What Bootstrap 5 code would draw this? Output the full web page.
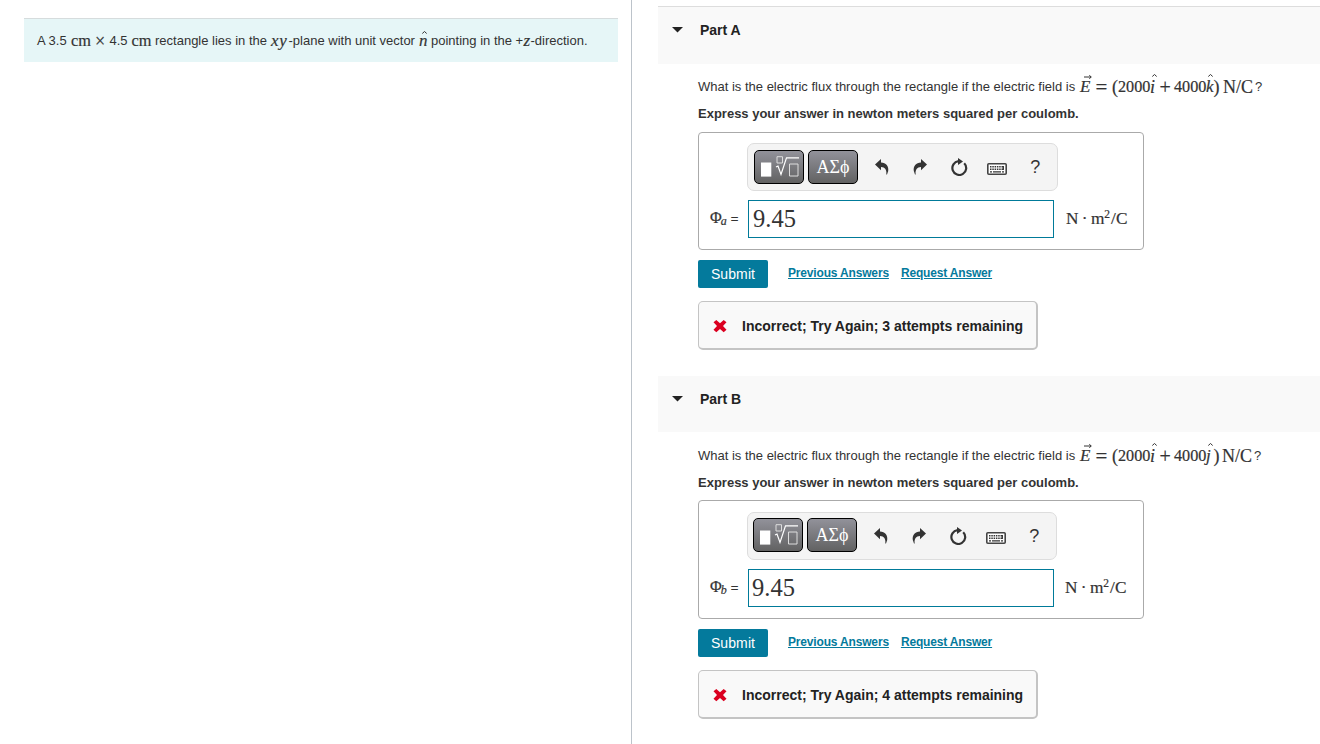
<!DOCTYPE html>
<html lang="en">
<head>
<meta charset="utf-8">
<meta name="viewport" content="width=device-width, initial-scale=1">
<title>Electric flux</title>
<link href="https://cdn.jsdelivr.net/npm/bootstrap@5.3.0/dist/css/bootstrap.min.css" rel="stylesheet">
<style>
body{font-family:"Liberation Sans",Arial,sans-serif;font-size:13px;line-height:20px;color:#333;background:#fff;height:744px;overflow:hidden}
.pane-left{width:632px;border-right:1px solid #bcc3ca;padding:18px 13px 0 24px}
.intro{height:44px;background:#e6f6f7;border-top:1px solid #d6dcdd;padding:12px 0 0 13px}
.pane-right{padding:6px 0 0 26px}
.part-head{height:56px;background:#f9f9f9;padding:13px 0 0 14px}
.part-head h2{font-size:14px;line-height:20px;font-weight:700;color:#222;margin:0 0 0 17px}
.first-head{height:58px;border-top:1px solid #ddd}
.part-body{padding:10px 0 0 40px}
.line{display:flex;white-space:pre;height:26px;line-height:26px}
.intro .line{height:20px;line-height:20px}
.line>span{flex:none;position:relative}
.ser{font-family:"Liberation Serif","Times New Roman",serif}
.line .ser,.units,.field-name{-webkit-text-stroke:.2px #333}
.xy{letter-spacing:.8px}
.mth{font-size:16.2px}
.hatmark{position:absolute;overflow:visible;fill:none;stroke:#333;stroke-width:1}
.instr{font-weight:700;letter-spacing:0;height:20px;margin-top:4px}
.answer-box{width:446px;height:118px;border:1px solid #aaa;border-radius:4px;margin-top:8px;padding:10px 0 0 11px}
.tools{width:311px;height:48px;margin-left:37px;background:#f4f4f4;border:1px solid #ddd;border-radius:7px;padding:0 6px}
.tool-btn{width:50px;height:34px;border:1px solid #000;border-radius:5px;background:linear-gradient(#92929a,#626262);color:#fff;padding:0;font-size:18px;line-height:30px}
.tool-btn svg{display:block;margin:-1px 0 0 6px;overflow:visible}
.tool-btn+.tool-btn{margin-left:4px}
.tool-icons{margin-left:5px}
.tool-ico{width:38.3px;height:20px;flex:none;display:flex;align-items:center;justify-content:center;font-size:18px;color:#333;fill:#333}
.field-row{margin-top:9px;height:38px}
.field-name{width:38px;font-size:16px;white-space:nowrap;padding-bottom:1px}
.field-name sub{font-size:12px;font-style:italic;bottom:-.2em;margin-left:-1px}
.eq{font-family:"Liberation Sans",Arial,sans-serif;font-size:13px}
.field{width:306px;height:38px;border:1px solid #007a99;padding:0 0 0 4px;font-size:24.5px;line-height:36px;color:#333}
.units{margin-left:12px;font-size:17.3px;white-space:pre;word-spacing:-1px}
.units sup{font-size:11.5px;top:-.55em;margin-right:1px}
.submit-btn{width:70px;height:28px;border-radius:2px;border:0;background:#047a9c;color:#fff;font-size:14px;padding:0;letter-spacing:.1px}
.act{color:#047a9c;font-weight:700;font-size:12px;line-height:16px;letter-spacing:-.17px;text-decoration:underline}
.feedback{width:340px;height:49px;margin-top:13px;border:1px solid #c4c4c4;border-right-width:2px;border-bottom-width:2px;border-radius:5px;background:#f9f9f9;font-size:14px;font-weight:700;color:#222;padding:1px 0 0 14px}
.part-b .part-body{padding-top:11px}
.part-b .answer-box{margin-top:7px;height:119px;padding-top:11px}
.part-b .tools{width:310px;padding:0 5px}
.part-b .tool-btn{margin-top:-2px}
.part-b .tool-ico{margin-top:-1px}
.part-b .field{padding-left:3px}
.part-b .units{margin-left:11px}
.part-a{height:370px}
</style>
<script src="https://cdn.jsdelivr.net/npm/bootstrap@5.3.0/dist/js/bootstrap.bundle.min.js"></script>
</head>
<body>
<svg width="0" height="0" class="d-none" aria-hidden="true">
<symbol id="undo" viewBox="0 0 14 16"><path d="M0 5.500 6 0V3.400C11 3.400 14 7 13.200 12L12 15.400H11.300C12 11 10 8.200 6 8V11.200Z"/></symbol>
<symbol id="reload" viewBox="0 0 18 18"><path d="M14.200 5.200A6.900 6.900 0 1 1 8.500 3.200" fill="none" stroke="#333" stroke-width="2.200"/><path d="M8 0 13 3.400 8 7Z"/></symbol>
<symbol id="keys" viewBox="0 0 20 12"><rect x=".8" y=".8" width="18.400" height="10.400" rx="1" fill="#fff" stroke="#444" stroke-width="1.600"/><path d="M3 3.700H17M3 6.200H17" stroke="#333" stroke-width="1.400" stroke-dasharray="1.500 .8"/><path d="M3 8.800h2M6 8.800h8M15 8.800h2M16.300 3v4" stroke="#333" stroke-width="1.300"/></symbol>
<symbol id="root" viewBox="0 0 38 21"><path d="M0 6.500H10.300V20.600H0Z" fill="#fff"/><path d="M16 .7H21.500V7H16ZM28.500 8H37V20H28.500Z" fill="none" stroke="#ddd"/><path d="M15 11 17 10 20 18.500 25.500 1.800H38" fill="none" stroke="#fff" stroke-width="1.200"/></symbol>
<symbol id="cross" viewBox="0 0 14 14"><path d="M3.300 1 7 4.200 10.700 1 13.500 3.300 10 7 13.500 10.700 10.700 13.300 7 10 3.300 13.300.5 10.700 4 7 .5 3.300Z" fill="#db0020"/></symbol>
</svg>
<div class="d-flex h-100">
<section class="pane-left flex-shrink-0">
<div class="intro"><div class="line" id="intro-line"></div></div>
</section>
<main class="pane-right flex-grow-1">
<section class="part-a" id="pa"></section>
<section class="part-b" id="pb"></section>
</main>
</div>
<script>
const hat = (x, y) => `<svg class="hatmark" style="left:${x}px;top:${y}px" width="5" height="3"><path d="M.3 2.500 2.500.500 4.700 2.500"/></svg>`;
const arrow = `<svg class="hatmark" style="left:4px;top:1px" width="8" height="4"><path d="M0 2H7M5.300.300 7.300 2 5.300 3.700"/></svg>`;
const row = (parts) => parts.map(([text, width, cls = "", size, extra = ""]) =>
  `<span class="${cls}" style="width:${width}px;${size ? "font-size:" + size + "px" : ""}">${text}${extra}</span>`).join("");
const it = "ser fst-italic";
document.getElementById("intro-line").innerHTML = row([
  ["A 3.5", 34], ["cm", 24, "ser", 16.3], ["×", 14.5, "ser", 18], ["4.5", 22], ["cm", 23.5, "ser", 16.3],
  ["rectangle lies in the", 116], ["xy", 17.5, it + " xy", 17], ["-plane with unit vector", 130.5], ["n", 12, it, 17, hat(3, 0)],
  ["pointing in the +", 92.5], ["z", 7, it, 17], ["-direction.", 60]]);
function part(name, sub, vec, tries, first) {
  const b = !first;
  return `<div class="part-head ${first ? "first-head" : ""} d-flex align-items-start"><svg width="11" height="6" style="margin-top:7px" viewBox="0 0 11 6"><path d="M0 0H11L5.500 5.500Z" fill="#222"/></svg><h2>Part ${name}</h2></div>
<div class="part-body"><div class="line">` + row([
  ["What is the electric flux through the rectangle if the electric field is", 382],
  ["E", 15.5, it, 17, arrow], ["=", 16.5, "ser", 21], ["(", 6, "ser", 18], ["2000", 32, "ser mth"],
  ["i", 9.5, it, 18, hat(2, 0)], ["+", 14.5, "ser", 20], ["4000", 32, "ser mth"], [vec, 7.5, it, 17, hat(2, 0)],
  [")", b ? 8.5 : 9.5, "ser", 18], ["N/C", 32, "ser", 18], ["?", 8]]) + `</div>
<div class="instr">Express your answer in newton meters squared per coulomb.</div>
<div class="answer-box">
<div class="tools d-flex align-items-center"><button class="tool-btn flex-shrink-0"><svg width="38" height="21"><use href="#root"/></svg></button><button class="tool-btn ser flex-shrink-0">ΑΣϕ</button>
<span class="tool-icons d-flex"><span class="tool-ico"><svg width="14" height="16"><use href="#undo"/></svg></span><span class="tool-ico"><svg width="14" height="16" style="transform:scaleX(-1)"><use href="#undo"/></svg></span><span class="tool-ico"><svg width="18" height="18"><use href="#reload"/></svg></span><span class="tool-ico pt-1"><svg width="20" height="12"><use href="#keys"/></svg></span><span class="tool-ico">?</span></span></div>
<div class="field-row d-flex align-items-center"><div class="field-name ser">Φ<sub>${sub}</sub> <span class="eq">=</span></div><div class="field ser">9.45</div><div class="units ser">N · m<sup>2</sup>/C</div></div>
</div>
<div class="d-flex" style="margin-top:10px"><button class="submit-btn">Submit</button><a class="act" href="#" style="margin:5px 12px 0 20px">Previous Answers</a><a class="act" href="#" style="margin-top:5px">Request Answer</a></div>
<div class="feedback d-flex align-items-center"><svg width="14" height="14"><use href="#cross"/></svg><span style="margin-left:15px">Incorrect; Try Again; ${tries} attempts remaining</span></div></div>`;
}
document.getElementById("pa").innerHTML = part("A", "a", "k", 3, true);
document.getElementById("pb").innerHTML = part("B", "b", "j", 4, false);
</script>
</body>
</html>
